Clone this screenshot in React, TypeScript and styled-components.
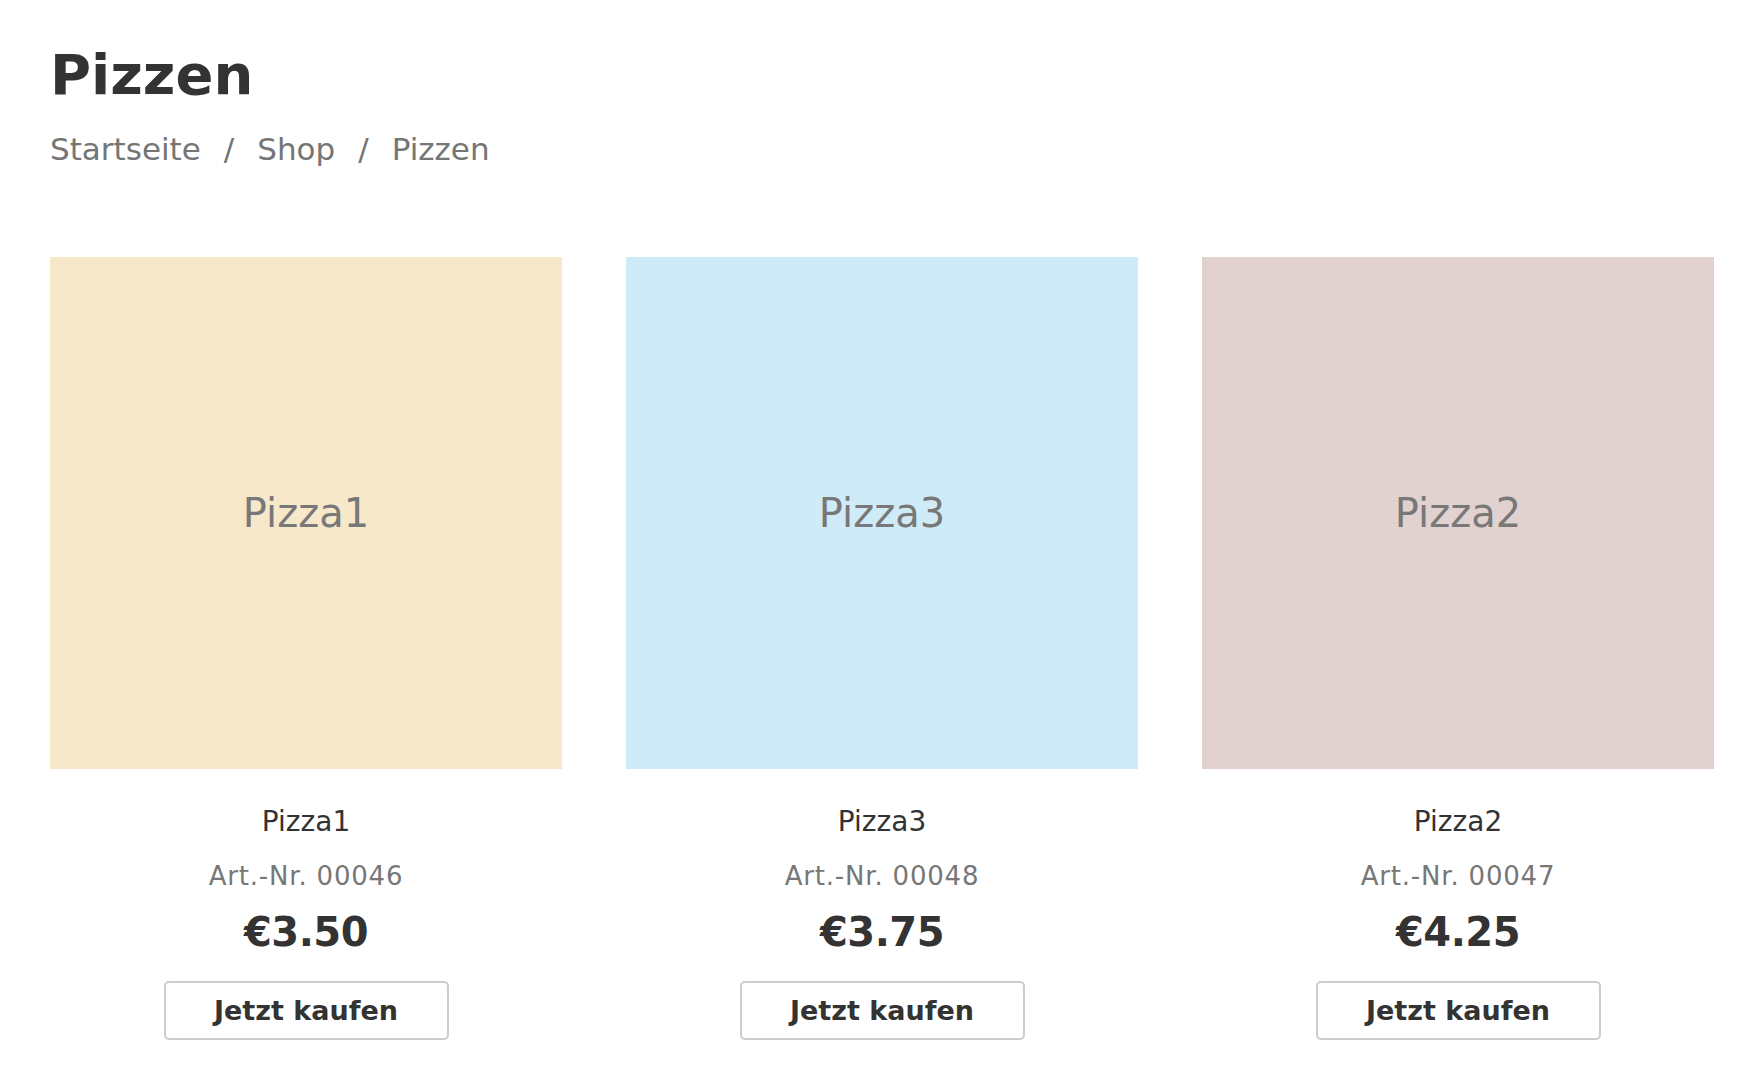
import styled, { createGlobalStyle } from "styled-components";

// #region styled
const GlobalStyle = createGlobalStyle`
  html, body {
    margin: 0;
    padding: 0;
    background: #ffffff;
  }

  body {
    font-family: "DejaVu Sans", "Liberation Sans", sans-serif;
    color: #333333;
  }
`;

const Page = styled.div`
  padding: 41px 50px 0 50px;
`;

const Title = styled.h1`
  margin: 0;

  font-size: 56px;
  font-weight: 700;
  line-height: 1.2;
  color: #333333;
`;

const Breadcrumb = styled.nav`
  margin-top: 23px;

  display: flex;
  flex-direction: row;
  align-items: baseline;

  font-size: 31px;
  line-height: 1.2;
  color: #757575;
`;

const Crumb = styled.span`
  white-space: nowrap;
`;

const Separator = styled.span`
  margin: 0 23px;
`;

const ProductGrid = styled.div`
  margin-top: 89px;

  display: grid;
  grid-template-columns: repeat(3, 512px);
  column-gap: 64px;
`;

const Card = styled.div`
  display: flex;
  flex-direction: column;
  align-items: center;
`;

const Picture = styled.div<{ $bg: string }>`
  width: 512px;
  height: 512px;

  display: flex;
  align-items: center;
  justify-content: center;

  background-color: ${(p) => p.$bg};

  font-size: 40px;
  color: #787878;
`;

const Name = styled.div`
  margin-top: 36px;

  font-size: 28px;
  line-height: 1.2;
  color: #333333;
`;

const ArticleNo = styled.div`
  margin-top: 22px;

  font-size: 26px;
  line-height: 1.2;
  letter-spacing: 0.8px;
  color: #777777;
`;

const Price = styled.div`
  margin-top: 16px;

  font-size: 40px;
  font-weight: 700;
  line-height: 1.2;
  letter-spacing: -0.5px;
  color: #333333;
`;

const BuyButton = styled.button`
  margin-top: 25px;

  width: 285px;
  height: 59px;

  display: flex;
  align-items: center;
  justify-content: center;

  background: #ffffff;
  border: 2px solid #cccccc;
  border-radius: 5px;

  font-family: "DejaVu Sans", "Liberation Sans", sans-serif;
  font-size: 27px;
  font-weight: 700;
  color: #333333;
  cursor: pointer;
`;
// #endregion styled

const products = [
  { name: "Pizza1", nr: "00046", price: "€3.50", bg: "#f8e8ca" },
  { name: "Pizza3", nr: "00048", price: "€3.75", bg: "#ceebf7" },
  { name: "Pizza2", nr: "00047", price: "€4.25", bg: "#e1d2cf" },
];

export default function App() {
  return (
    <Page>
      <GlobalStyle />
      <Title>Pizzen</Title>
      <Breadcrumb>
        <Crumb>Startseite</Crumb>
        <Separator>/</Separator>
        <Crumb>Shop</Crumb>
        <Separator>/</Separator>
        <Crumb>Pizzen</Crumb>
      </Breadcrumb>
      <ProductGrid>
        {products.map((p) => (
          <Card key={p.nr}>
            <Picture $bg={p.bg}>{p.name}</Picture>
            <Name>{p.name}</Name>
            <ArticleNo>Art.-Nr. {p.nr}</ArticleNo>
            <Price>{p.price}</Price>
            <BuyButton>Jetzt kaufen</BuyButton>
          </Card>
        ))}
      </ProductGrid>
    </Page>
  );
}
